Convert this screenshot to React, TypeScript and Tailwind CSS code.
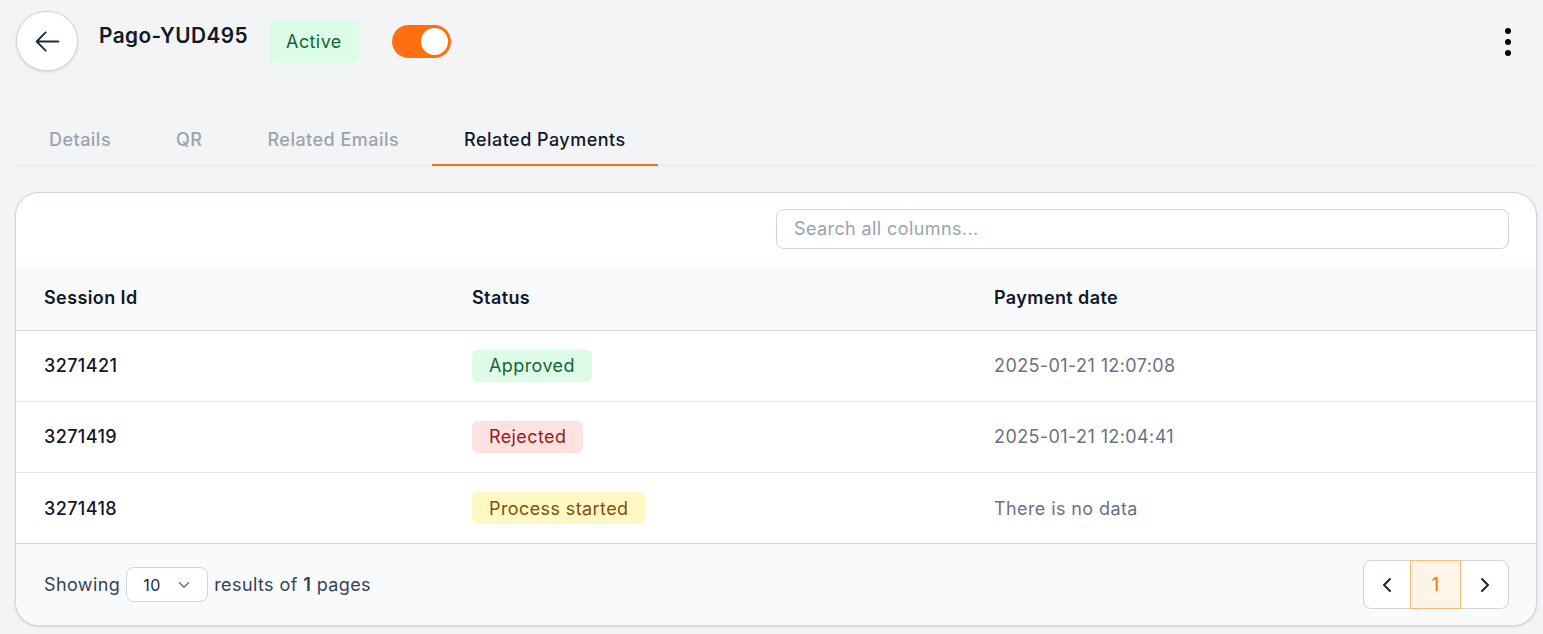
import { ChevronDown, ChevronLeft, ChevronRight } from "lucide-react";

const rows = [
  { id: "3271421", status: "Approved", badge: "bg-[#dcfce7] text-[#166534]", date: "2025-01-21 12:07:08" },
  { id: "3271419", status: "Rejected", badge: "bg-[#fee2e2] text-[#991b1b]", date: "2025-01-21 12:04:41" },
  { id: "3271418", status: "Process started", badge: "bg-[#fef9c3] text-[#854d0e]", date: "There is no data" },
];

export default function App() {
  return (
    <div className="w-[1543px] h-[634px] overflow-hidden bg-[#f3f4f6] font-['Inter',sans-serif] tracking-[.025em] text-[#111827]">
      {/* Header */}
      <div className="h-[114px] pl-4 pr-[32px] pt-[11px] flex items-start">
        <button className="w-[62px] h-[60px] shrink-0 rounded-full bg-white border border-gray-300 shadow-sm flex items-center justify-center">
          <svg viewBox="0 0 24 24" fill="none" stroke="currentColor" strokeWidth={1.5} strokeLinecap="round" strokeLinejoin="round" className="w-[29px] h-[29px] text-gray-800">
            <path d="M10.5 19.5 3 12m0 0 7.5-7.5M3 12h18" />
          </svg>
        </button>
        <h1 className="ml-[21px] mt-[11px] text-[20.8px] leading-7 font-semibold">Pago-YUD495</h1>
        <span className="ml-[21px] mt-[9px] w-[90px] h-[43px] rounded-md bg-[#dcfce7] text-[#166534] text-lg flex items-center justify-center">
          Active
        </span>
        <div className="ml-[33px] mt-[14px] w-[59px] h-[33px] rounded-full bg-[#ff6f0f] flex items-center justify-end pr-[3px]">
          <div className="w-[27px] h-[27px] rounded-full bg-white" />
        </div>
        <div className="ml-auto mt-[17px] flex flex-col gap-[5px]">
          <div className="w-[6px] h-[6px] rounded-full bg-black" />
          <div className="w-[6px] h-[6px] rounded-full bg-black" />
          <div className="w-[6px] h-[6px] rounded-full bg-black" />
        </div>
      </div>

      {/* Tabs */}
      <div className="mx-4 mr-[7px] h-[52px] flex border-b border-gray-200 text-lg tracking-[.026em] font-medium text-[#9ca3af]">
        <div className="pl-[33px] pr-[32.5px] pt-[12px]">Details</div>
        <div className="px-[32.5px] pt-[12px]">QR</div>
        <div className="px-[32.5px] pt-[12px]">Related Emails</div>
        <div className="px-[32.5px] pt-[12px] h-[52px] border-b-2 border-[#ff6f0f] text-[#111827]">Related Payments</div>
      </div>

      {/* Table card */}
      <div className="mt-[26px] ml-[15px] mr-[6px] h-[434px] rounded-3xl border border-gray-300 bg-white shadow-sm overflow-hidden flex flex-col">
        <div className="h-[72px] shrink-0 flex items-start justify-end pr-[27px] pt-4">
          <input
            placeholder="Search all columns..."
            className="w-[733px] h-10 rounded-lg border border-gray-300 px-[17px] pb-px text-lg bg-white placeholder:text-[#9ca3af] outline-none"
          />
        </div>

        <div className="h-[66px] shrink-0 flex items-center bg-[#f9fafb] border-b border-gray-300 text-lg font-semibold pl-7">
          <div className="w-[428px]">Session Id</div>
          <div className="w-[522px]">Status</div>
          <div>Payment date</div>
        </div>

        {rows.map((row, i) => {
          const last = i === rows.length - 1;
          return (
            <div
              key={row.id}
              className={`shrink-0 flex items-center text-lg pl-7 ${last ? "h-[70px]" : "h-[71px] border-b border-gray-200"}`}
            >
              <div className={`w-[428px] font-[450] ${last ? "pt-0.5" : ""}`}>{row.id}</div>
              <div className="w-[522px]">
                <span className={`inline-flex h-8 items-center rounded-md px-[17px] ${last ? "pt-0.5" : ""} ${row.badge}`}>{row.status}</span>
              </div>
              <div className={`text-[#6b7280] ${last ? "pt-0.5" : ""}`}>{row.date}</div>
            </div>
          );
        })}

        {/* Footer */}
        <div className="flex-1 flex items-center justify-between bg-[#f9fafb] border-t border-gray-300 pl-7 pr-[27px] text-lg text-[#374151]">
          <div className="flex items-center gap-[6px]">
            <span>Showing</span>
            <div className="w-[82px] h-[35px] rounded-lg border border-gray-300 bg-white flex items-center justify-between pl-4 pr-[14px] text-base text-[#1f2937]">
              <span>10</span>
              <ChevronDown className="w-[18px] h-[18px] text-gray-500" />
            </div>
            <span>
              results of <b className="font-semibold">1</b> pages
            </span>
          </div>
          <div className="h-[49px] flex rounded-lg border border-gray-300 bg-white">
            <div className="w-[46px] flex items-center justify-center">
              <ChevronLeft className="w-6 h-6 text-[#1f2937]" strokeWidth={2} />
            </div>
            <div className="w-[51px] -my-px flex items-center justify-center bg-[#fff4e8] border border-[#fdba74] text-[#ff6f0f]">
              1
            </div>
            <div className="w-[47px] flex items-center justify-center">
              <ChevronRight className="w-6 h-6 text-[#1f2937]" strokeWidth={2} />
            </div>
          </div>
        </div>
      </div>
    </div>
  );
}
